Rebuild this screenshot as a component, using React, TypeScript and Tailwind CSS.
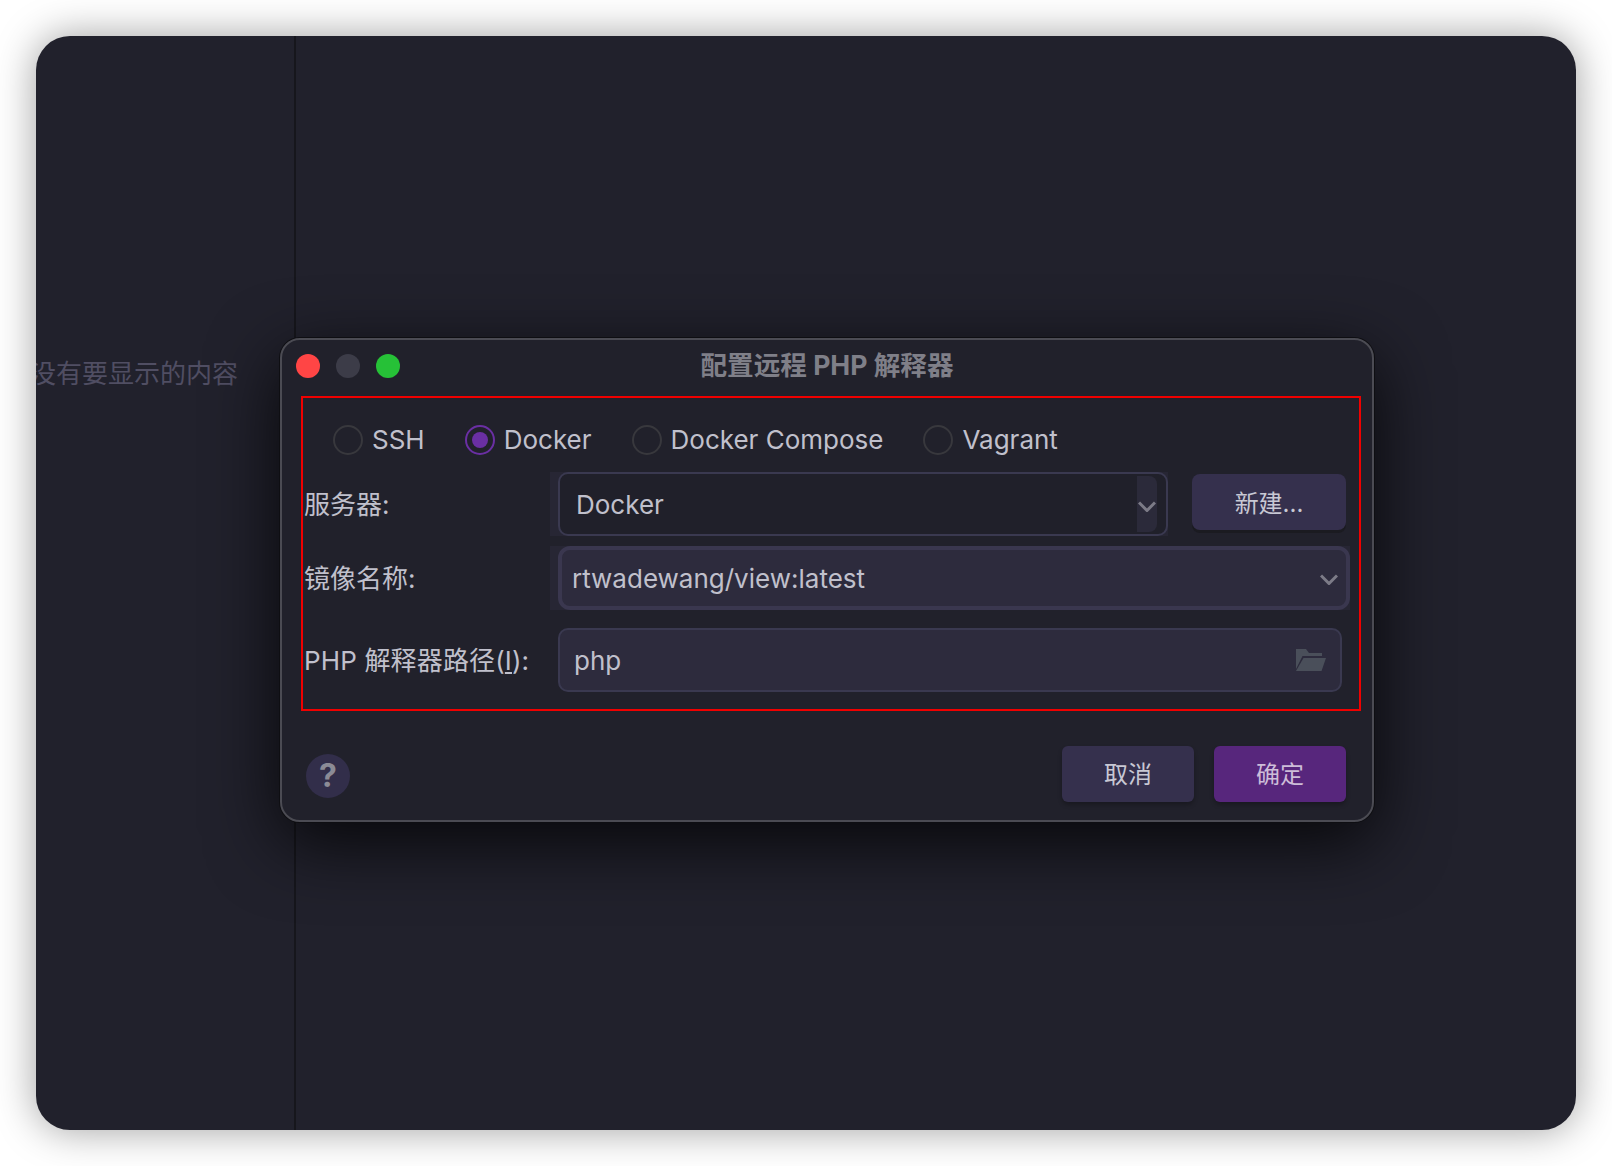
const Radio = ({ label, checked = false }: { label: string; checked?: boolean }) => (
  <div className="flex items-center gap-[9px]">
    <span
      className={`flex h-[30px] w-[30px] items-center justify-center rounded-full border-2 ${
        checked ? "border-[#6a2fa3]" : "border-[#38383d]"
      }`}
    >
      {checked && <span className="h-[16px] w-[16px] rounded-full bg-[#6a2fa3]" />}
    </span>
    <span className="text-[26px] leading-[30px] text-[#c0c0cc]">{label}</span>
  </div>
);

const Chevron = ({ className = "" }: { className?: string }) => (
  <svg width="18" height="11" viewBox="0 0 18 11" fill="none" className={className}>
    <path d="M1 1.5 9 9.5 17 1.5" stroke="#7c7b87" strokeWidth="3" />
  </svg>
);

const Folder = () => (
  <svg width="30" height="22" viewBox="0 0 30 22" fill="#4a4f5a">
    <path d="M0 0H10L13 4H26V7H6.5L0 20Z" />
    <path d="M7.5 9H30L25.5 22H0Z" />
  </svg>
);

const App = () => {
  return (
    <div className="h-[1166px] w-[1612px] bg-white p-[36px] font-['Inter','Noto_Sans_CJK_SC',sans-serif]">
      <div className="relative flex h-[1094px] w-[1540px] overflow-hidden rounded-[34px] bg-[#21212c] shadow-[0_0_40px_rgba(0,0,0,0.38)]">
        <div className="h-full w-[260px] overflow-hidden border-r-2 border-[#16161c] pt-[323px]">
          <p className="ml-[-6px] whitespace-nowrap text-[26px] leading-[30px] text-[#504e63]">没有要显示的内容</p>
        </div>

        {/* dialog */}
        <div className="absolute left-[244px] top-[302px] h-[484px] w-[1094px] rounded-[20px] border-2 border-[#4b4b53] bg-[#21212b] shadow-[0_0_0_1px_#0e0e12,0_20px_70px_rgba(0,0,0,0.8)]">
          <div className="grid h-[56px] grid-cols-[1fr_auto_1fr] items-center pb-[4px]">
            <div className="flex gap-[16px] pl-[14px]">
              <span className="h-[24px] w-[24px] rounded-full bg-[#ff4545]" />
              <span className="h-[24px] w-[24px] rounded-full bg-[#3c3c48]" />
              <span className="h-[24px] w-[24px] rounded-full bg-[#26c137]" />
            </div>
            <h1 className="mb-[2px] text-[26.6px] font-bold leading-[30px] text-[#7f7f88]">配置远程 PHP 解释器</h1>
            <div />
          </div>

          <div className="ml-[19px] h-[315px] w-[1060px] border-2 border-[#f00000]">
            <div className="flex gap-[40px] pl-[30px] pt-[27px]">
              <Radio label="SSH" />
              <Radio label="Docker" checked />
              <Radio label="Docker Compose" />
              <Radio label="Vagrant" />
            </div>

            <div className="mt-[17px] flex h-[64px] items-center">
              <label className="w-[247px] pl-[1px] text-[26px] text-[#c0c0cc]">服务器:</label>
              <div className="bg-[#272634] pl-[8px]">
                <div className="flex h-[64px] w-[610px] items-center justify-between rounded-[10px] border-2 border-[#3a3950] bg-[#20202a] pl-[16px] pr-[9px]">
                  <span className="text-[26px] text-[#c0c0cc]">Docker</span>
                  <div className="relative h-[56px] w-[20px] rounded-r-[8px] bg-[#2b2a3a]">
                    <Chevron className="absolute left-[1px] top-[25px]" />
                  </div>
                </div>
              </div>
              <button className="mb-[4px] ml-[24px] h-[56px] w-[154px] rounded-[8px] bg-[#35304d] pt-[3px] text-[24px] text-[#c8c8d4] shadow-[0_3px_0_#1b1b21]">
                新建...
              </button>
            </div>

            <div className="mt-[10px] flex h-[64px] items-center">
              <label className="w-[247px] pl-[1px] text-[26px] text-[#c0c0cc]">镜像名称:</label>
              <div className="bg-[#272634] pl-[8px]">
                <div className="flex h-[64px] w-[792px] items-center justify-between rounded-[12px] border-4 border-[#3a374f] bg-[#2d2b3d] pl-[10px] pr-[8px]">
                  <span className="text-[26px] text-[#c0c0cc]">rtwadewang/view:latest</span>
                  <Chevron className="mt-[2px]" />
                </div>
              </div>
            </div>

            <div className="mt-[18px] flex h-[64px] items-center">
              <label className="w-[255px] pl-[1px] text-[26px] tracking-[0.15px] text-[#c0c0cc]">
                PHP 解释器路径(<span className="underline">I</span>):
              </label>
              <div className="flex h-[64px] w-[784px] items-center justify-between rounded-[10px] border-2 border-[#3a3950] bg-[#2d2b3d] pl-[14px] pr-[14px]">
                <span className="text-[26px] text-[#c0c0cc]">php</span>
                <Folder />
              </div>
            </div>
          </div>

          <div className="mt-[35px] flex items-start justify-between pl-[24px] pr-[26px]">
            <div className="mt-[8px] flex h-[44px] w-[44px] items-center justify-center rounded-full bg-[#322e4a] text-[32px] font-bold text-[#8b8b96]">
              ?
            </div>
            <div className="flex gap-[20px]">
              <button className="h-[56px] w-[132px] rounded-[6px] bg-[#35304d] pt-[1px] text-[24px] text-[#c8c8d4] shadow-[0_3px_4px_rgba(0,0,0,0.25)]">
                取消
              </button>
              <button className="h-[56px] w-[132px] rounded-[6px] bg-[#57267c] pt-[1px] text-[24px] text-[#cdbdd8] shadow-[0_3px_4px_rgba(0,0,0,0.25)]">
                确定
              </button>
            </div>
          </div>
        </div>
      </div>
    </div>
  );
};

export default App;
